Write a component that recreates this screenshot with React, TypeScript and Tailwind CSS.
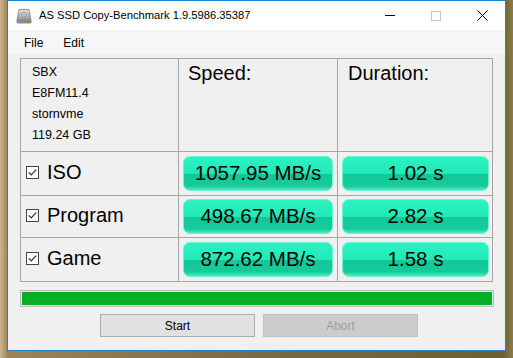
import React from 'react';

interface Result {
  name: string;
  speed: string;
  duration: string;
}

const results: Result[] = [
  { name: 'ISO', speed: '1057.95 MB/s', duration: '1.02 s' },
  { name: 'Program', speed: '498.67 MB/s', duration: '2.82 s' },
  { name: 'Game', speed: '872.62 MB/s', duration: '1.58 s' },
];

const rowHeights = ['h-[43px]', 'h-[41px]', 'h-[43px]'];

const DriveIcon = () => (
  <svg width="16" height="16" viewBox="0 0 16 16">
    <defs>
      <linearGradient id="drv" x1="0" y1="0" x2="0" y2="1">
        <stop offset="0" stopColor="#e4e4e4" />
        <stop offset="0.6" stopColor="#a9a9a9" />
        <stop offset="1" stopColor="#6e6e6e" />
      </linearGradient>
    </defs>
    <path d="M3 1.5 H13 L15 12 V15 H1 V12 Z" fill="url(#drv)" stroke="#7a7a7a" strokeWidth="0.8" />
    <rect x="1" y="12" width="14" height="3" fill="#8c8c8c" />
    <rect x="11.5" y="13" width="2" height="1" fill="#3c6fe0" />
    <circle cx="8" cy="6.5" r="2.6" fill="none" stroke="#999" strokeWidth="0.8" />
  </svg>
);

const Checkbox = () => (
  <svg width="13" height="13" viewBox="0 0 13 13" className="shrink-0 -mt-[3px]">
    <rect x="0.5" y="0.5" width="12" height="12" fill="#ffffff" stroke="#444444" />
    <path d="M2.8 6.4 L5.2 8.9 L10.2 3.6" fill="none" stroke="#333333" strokeWidth="1.3" />
  </svg>
);

const Pill = ({ children }: { children: React.ReactNode }) => (
  <div className="flex h-[35px] w-full items-center justify-center rounded-[7px] border border-[#6df3d1] bg-[linear-gradient(#2cf2c2_0%,#21e9b8_50%,#13c897_51%,#15cb9a_88%,#52e8c6_100%)] text-[20.5px] text-black">
    {children}
  </div>
);

const App: React.FC = () => {
  return (
    <div className="flex h-[358px] w-[513px] bg-[linear-gradient(90deg,#c9b895_0%,#9c8458_1.5%,#7a6a45_50%,#6d6032_98%,#8a7a4a_100%)] pl-[7px] font-['Liberation_Sans',Arial,sans-serif]">
      <div className="flex h-[351px] w-[499px] flex-col border border-[#1883d7] bg-[#f0f0f0]">
        {/* title bar */}
        <div className="flex h-[29px] items-center bg-white">
          <div className="ml-[8px] mt-[1px]">
            <DriveIcon />
          </div>
          <span className="ml-[7px] text-[11.2px] text-black">AS SSD Copy-Benchmark 1.9.5986.35387</span>
          <div className="ml-auto flex h-full">
            <div className="flex w-[46px] items-center justify-center">
              <div className="h-px w-[10px] bg-black" />
            </div>
            <div className="flex w-[46px] items-center justify-center">
              <div className="h-[10px] w-[10px] border border-[#c8c8c8]" />
            </div>
            <div className="flex w-[46px] items-center justify-center">
              <svg width="11" height="11" viewBox="0 0 11 11">
                <path d="M0.5 0.5 L10.5 10.5 M10.5 0.5 L0.5 10.5" stroke="#000" strokeWidth="1" />
              </svg>
            </div>
          </div>
        </div>

        {/* menu */}
        <div className="flex h-[24px] items-center gap-[20px] bg-[#f5f6f7] pl-[16px] pt-[2px] text-[12px] text-black">
          <span>File</span>
          <span>Edit</span>
        </div>

        {/* results table */}
        <div className="ml-[12px] mt-[4px] grid w-[473px] grid-cols-[157px_158px_154px] gap-px border border-[#a6a6a6] bg-[#a6a6a6]">
          <div className="h-[92px] bg-[#f0f0f0] pl-[11px] pt-[3px] text-[12.5px] leading-[21px] text-black">
            <div>SBX</div>
            <div>E8FM11.4</div>
            <div>stornvme</div>
            <div>119.24 GB</div>
          </div>
          <div className="h-[92px] bg-[#f0f0f0] pl-[9px] pt-[3px] text-[20px] leading-[23px] text-black">Speed:</div>
          <div className="h-[92px] bg-[#f0f0f0] pl-[10px] pt-[3px] text-[20px] leading-[23px] text-black">Duration:</div>

          {results.map((r, i) => (
            <React.Fragment key={r.name}>
              <div className={`flex ${rowHeights[i]} items-center gap-[8px] bg-[#f0f0f0] pl-[5px] text-[20px] text-black`}>
                <Checkbox />
                <span className="-mt-[3px]">{r.name}</span>
              </div>
              <div className={`flex ${rowHeights[i]} items-center bg-[#f0f0f0] px-[4px]`}>
                <Pill>{r.speed}</Pill>
              </div>
              <div className={`flex ${rowHeights[i]} items-center bg-[#f0f0f0] pl-[4px] pr-[3px]`}>
                <Pill>{r.duration}</Pill>
              </div>
            </React.Fragment>
          ))}
        </div>

        {/* progress */}
        <div className="ml-[12px] mt-[8px] h-[17px] w-[474px] border border-[#bcbcbc] bg-[#e6e6e6] p-px">
          <div className="h-full w-full bg-[#06b025]" />
        </div>

        {/* buttons */}
        <div className="ml-[92px] mt-[7px] flex gap-[8px] text-[12px]">
          <button className="flex h-[23px] w-[155px] items-center justify-center border border-[#adadad] bg-[#e1e1e1] text-black">
            Start
          </button>
          <button disabled className="flex h-[23px] w-[155px] items-center justify-center border border-[#bfbfbf] bg-[#cccccc] text-[#a0a0a0]">
            Abort
          </button>
        </div>
      </div>
    </div>
  );
};

export default App;
